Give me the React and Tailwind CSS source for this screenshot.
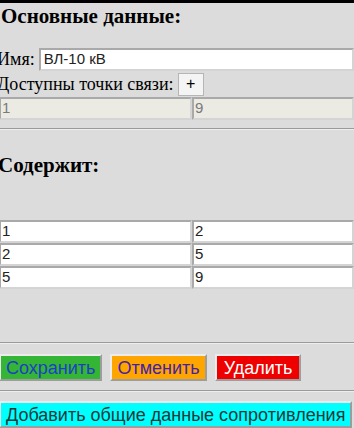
import React from "react";

const serif = { fontFamily: '"Liberation Serif", "Times New Roman", serif' };
const sans = { fontFamily: '"Liberation Sans", Arial, sans-serif' };

function Cell({ value, disabled, className = "" }) {
  return (
    <div
      className={`h-[23px] flex items-center pl-[1px] text-[15px] border-2 border-t-[#a9a9a9] border-l-[#a9a9a9] border-b-[#d4d4d4] border-r-[#d4d4d4] ${
        disabled ? "bg-[#ebebe4] text-[#7a7a7a]" : "bg-white text-[#222]"
      } ${className}`}
      style={sans}
    >
      {value}
    </div>
  );
}

function Hr() {
  return <div className="h-[2px] border-t border-t-[#9a9a9a] border-b border-b-[#eeeeee]" />;
}

function Btn({ children, className = "" }) {
  return (
    <div
      className={`h-[27px] flex items-center px-[5px] text-[18px] leading-none border-2 border-t-[#ececec] border-l-[#ececec] border-b-[#9d9d9d] border-r-[#9d9d9d] ${className}`}
      style={sans}
    >
      {children}
    </div>
  );
}

export default function App() {
  return (
    <div className="w-[354px] h-[428px] overflow-hidden bg-[#dcdcdc] text-black" style={serif}>
      <div className="h-[3px] bg-black" />
      <div className="h-[24px] mt-[1px] text-[21px] font-bold leading-[24px] pl-[1px] whitespace-nowrap">Основные данные:</div>
      <div className="h-[23px] mt-[20px] flex items-center">
        <span className="text-[18px] -ml-[3px] mr-[4px] whitespace-nowrap">Имя:</span>
        <div className="flex-1">
          <Cell value="ВЛ-10 кВ" className="pl-[3px]" />
        </div>
      </div>
      <div className="h-[24px] mt-[1px] flex items-center">
        <span className="text-[18px] -ml-[3px] mr-[4px] whitespace-nowrap">Доступны точки связи:</span>
        <div
          className="w-[26px] h-[23px] flex items-center justify-center bg-[#f4f4f4] border border-[#b5b5b5] text-[16px]"
          style={sans}
        >
          +
        </div>
      </div>
      <div className="flex mt-[1px]">
        <Cell value="1" disabled className="w-[193px] h-[22px] -ml-[1px]" />
        <Cell value="9" disabled className="flex-1 h-[22px]" />
      </div>
      <div className="mt-[8px]">
        <Hr />
      </div>
      <div className="h-[24px] mt-[23px] text-[21px] font-bold leading-[24px] -ml-[2px] whitespace-nowrap">Содержит:</div>
      <div className="mt-[43px] flex flex-col">
        {[
          ["1", "2"],
          ["2", "5"],
          ["5", "9"],
        ].map(([a, b], i) => (
          <div key={i} className="flex">
            <Cell value={a} className="w-[193px] -ml-[1px]" />
            <Cell value={b} className="flex-1" />
          </div>
        ))}
      </div>
      <div className="mt-[53px]">
        <Hr />
      </div>
      <div className="flex gap-[8px] mt-[10px]">
        <Btn className="bg-[#35b535] text-[#1d3fc4] -ml-[1px]">Сохранить</Btn>
        <Btn className="bg-[#ffa500] text-[#4422a8]">Отменить</Btn>
        <Btn className="bg-[#ee0000] text-white px-[7px]">Удалить</Btn>
      </div>
      <div className="mt-[9px]">
        <Hr />
      </div>
      <div className="mt-[9px] flex">
        <Btn className="bg-[#00ffff] text-[#1e3838] -ml-[1px] whitespace-nowrap">Добавить общие данные сопротивления</Btn>
      </div>
    </div>
  );
}
